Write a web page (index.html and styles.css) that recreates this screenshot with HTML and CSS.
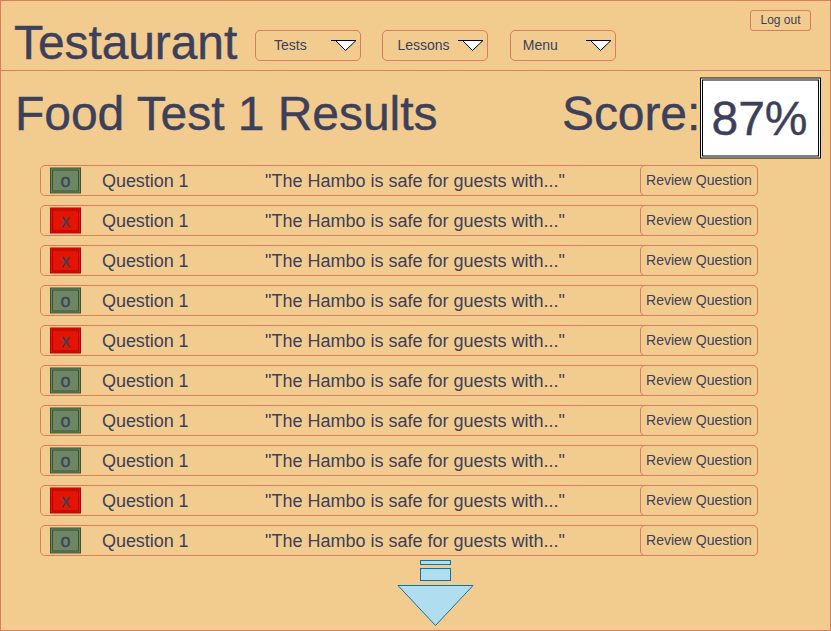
FILE: index.html
```html
<!DOCTYPE html>
<html lang="en">
<head>
<meta charset="utf-8">
<title>Testaurant</title>
<link rel="stylesheet" href="styles.css">
</head>
<body>
<div class="app">
  <header class="topbar">
    <h1 class="brand">Testaurant</h1>
    <nav class="nav">
      <button class="drop"><span>Tests</span><svg class="caret" width="28" height="14"><path d="M2 1.5H27L16.5 11.5L6.5 1.5"/></svg></button>
      <button class="drop lessons"><span>Lessons</span><svg class="caret" width="28" height="14"><path d="M2 1.5H27L16.5 11.5L6.5 1.5"/></svg></button>
      <button class="drop menu"><span>Menu</span><svg class="caret" width="28" height="14"><path d="M2 1.5H27L16.5 11.5L6.5 1.5"/></svg></button>
    </nav>
    <button class="logout">Log out</button>
  </header>
  <section class="summary">
    <h2 class="title">Food Test 1 Results</h2>
    <div class="label">Score:</div>
    <div class="score"><svg width="121" height="82"><rect x=".5" y="1" width="120" height="80"/><rect x="2.5" y="3" width="116" height="76"/></svg><span>87%</span></div>
  </section>
  <ul class="list" id="list"></ul>
  <svg class="more" width="78" height="70"><rect x="23.5" y="2.5" width="30" height="4"/><rect x="23.5" y="10.5" width="30" height="12"/><path d="M1 27.5H76L38.5 67.5Z"/></svg>
</div>
<script src="script.js"></script>
</body>
</html>
```
FILE: styles.css
```css
* { box-sizing: border-box; }
body { margin: 0; font-family: "Liberation Sans", Arial, sans-serif; color: #3d405b; background: #f2cc8f; }
h1, h2, ul { margin: 0; padding: 0; font-weight: 400; }
button { font: inherit; color: inherit; background: #f2cc8f; border: 1px solid #e07a5f; padding: 0; }
.app { width: 831px; height: 631px; border: 1px solid #e07a5f; overflow: hidden; }
.topbar { display: flex; height: 70px; border-bottom: 1px solid #e07a5f; }
.brand { width: 254px; padding: 14px 0 0 13px; font-size: 48px; line-height: 55px; letter-spacing: -.1px; -webkit-text-stroke: .4px #3d405b; }
.nav { display: flex; gap: 21.4px; padding-top: 29px; }
.drop { display: flex; justify-content: space-between; width: 106px; height: 31px; padding: 0 3px 0 18px; border-radius: 5px; font-size: 14px; line-height: 28px; }
.lessons, .menu { padding-left: 14px; }
.menu { padding-left: 12px; }
.caret { margin-top: 8px; fill: #fff; stroke: #000; }
.logout { width: 61px; height: 21px; margin: 9px 19px 0 auto; border-radius: 3px; padding-bottom: 1px; font-size: 12px; line-height: 18px; }
.summary { display: flex; height: 94px; font-size: 48px; -webkit-text-stroke: .4px #3d405b; }
.title { width: 561px; padding: 15px 0 0 14px; font-size: 48px; line-height: 55px; letter-spacing: -.05px; }
.label { width: 138px; padding-top: 15px; line-height: 55px; letter-spacing: -.1px; white-space: nowrap; }
.score { position: relative; width: 121px; height: 82px; margin-top: 6px; text-align: center; line-height: 83px; }
.score svg { position: absolute; left: 0; top: 0; fill: #fff; stroke: #000; }
.score span { position: relative; left: -1px; }
.list { width: 718px; margin-left: 39px; list-style: none; }
.row { display: flex; height: 31px; margin-bottom: 9px; border: 1px solid #e07a5f; border-radius: 5px; font-size: 18px; line-height: 31px; }
.mark { position: relative; width: 31px; height: 27px; margin: 1px 0 0 9px; text-align: center; line-height: 29px; }
.mark svg { position: absolute; left: 0; top: 0; fill: #6d8764; stroke: #3a5431; }
.mark.wrong svg { fill: #e51400; stroke: #b20000; }
.mark span { position: relative; -webkit-text-stroke: .3px #3d405b; }
.name { width: 163px; margin-left: 21px; letter-spacing: -.05px; }
.quote { flex: 1; white-space: nowrap; }
.review { width: 118px; height: 31px; margin: -1px; border-radius: 5px; padding-bottom: 1px; font-size: 14px; line-height: 28px; white-space: nowrap; }
.more { display: block; margin: -7px 0 0 396px; fill: #b1ddf0; stroke: #10739e; }
```
FILE: script.js
```js
const results = "oxxoxoooxo";
document.getElementById("list").innerHTML = [...results].map(r => `
  <li class="row">
    <div class="mark ${r === "x" ? "wrong" : ""}"><svg width="31" height="27"><rect x=".5" y="1" width="30" height="25"/><rect x="2.5" y="3" width="26" height="21"/></svg><span>${r}</span></div>
    <div class="name">Question 1</div>
    <div class="quote">"The Hambo is safe for guests with..."</div>
    <button class="review">Review Question</button>
  </li>`).join("");
```
